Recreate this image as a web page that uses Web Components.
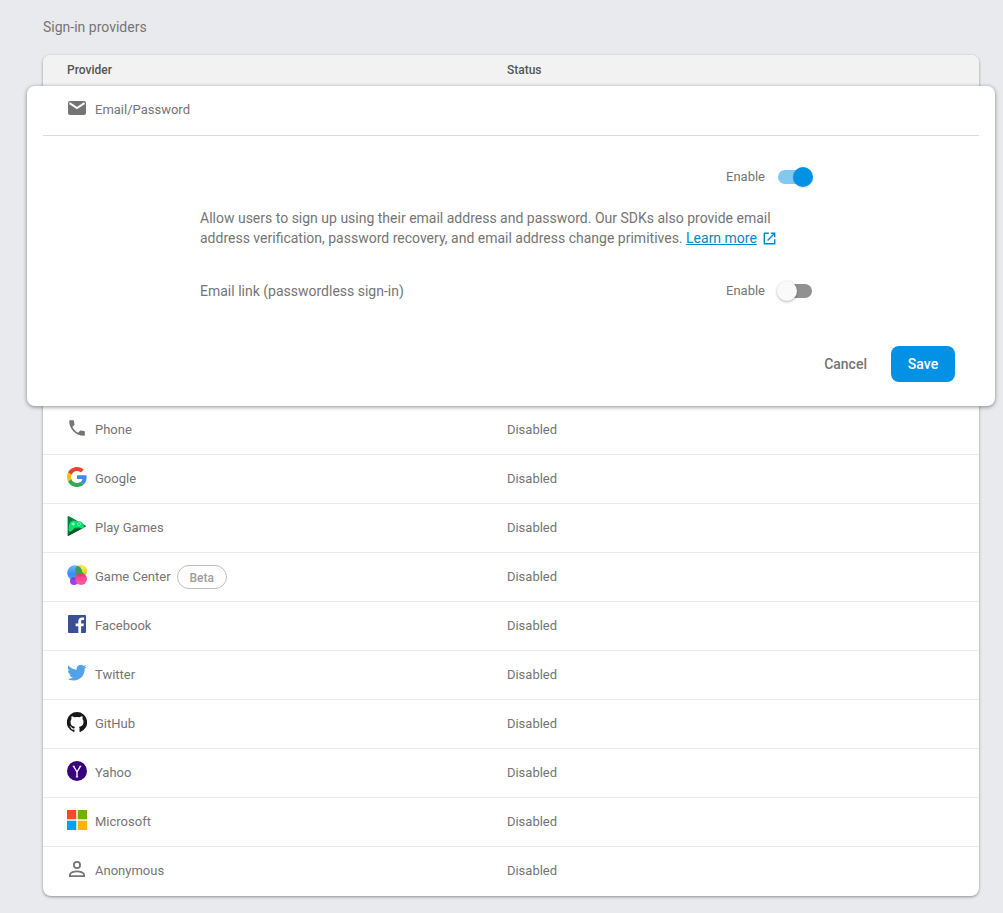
<!DOCTYPE html>
<html lang="en">
<head>
<meta charset="utf-8">
<meta name="viewport" content="width=device-width, initial-scale=1">
<title>Sign-in providers</title>
<style>
    body {
        margin: 0;
        background: #e8eaed;
        color: #757575;
        font-family: Roboto, "Liberation Sans", sans-serif;
        font-size: 13px;
        line-height: 20px;
    }
</style>
</head>
<body>
<sign-in-providers></sign-in-providers>

<script>
const ICONS = {
    email: `<path fill="#757575" d="M3 3h14a2 2 0 0 1 2 2v10a2 2 0 0 1-2 2H3a2 2 0 0 1-2-2V5a2 2 0 0 1 2-2z"/><path fill="none" stroke="#fff" stroke-width="2" d="M2.500 5.200 10 10l7.500-4.800"/>`,
    phone: `<path fill="#757575" transform="translate(-.4 -.4) scale(.87)" d="M6.620 10.790c1.440 2.830 3.760 5.140 6.590 6.590l2.200-2.200c.27-.27.67-.36 1.020-.24 1.120.37 2.330.57 3.570.57.55 0 1 .45 1 1V20c0 .55-.45 1-1 1-9.390 0-17-7.610-17-17 0-.55.45-1 1-1h3.500c.55 0 1 .45 1 1 0 1.250.2 2.450.57 3.570.11.35.03.74-.25 1.020l-2.200 2.200z"/>`,
    google: `<g transform="scale(.4167)"><path fill="#ea4335" d="M24 9.500c3.540 0 6.710 1.220 9.210 3.600l6.850-6.850C35.900 2.380 30.470 0 24 0 14.620 0 6.510 5.380 2.560 13.220l7.980 6.190C12.430 13.720 17.740 9.500 24 9.500z"/><path fill="#4285f4" d="M46.980 24.550c0-1.570-.15-3.090-.38-4.550H24v9.020h12.940c-.58 2.960-2.260 5.480-4.780 7.180l7.730 6c4.510-4.180 7.090-10.360 7.090-17.650z"/><path fill="#fbbc05" d="M10.530 28.590c-.48-1.450-.76-2.990-.76-4.590s.27-3.140.76-4.590l-7.980-6.190C.92 16.460 0 20.120 0 24s.92 7.540 2.560 10.780l7.970-6.190z"/><path fill="#34a853" d="M24 48c6.480 0 11.930-2.130 15.890-5.810l-7.730-6c-2.150 1.450-4.920 2.300-8.160 2.300-6.260 0-11.570-4.220-13.470-9.910l-7.980 6.190C6.510 42.620 14.620 48 24 48z"/></g>`,
    play: `<path fill="#087a3b" d="M1.200.2c-.4.100-.6.400-.6.900v18c0 .500.400.800.900.600l17-9c.7-.4.7-.9 0-1.300L2 .2a1 1 0 0 0-.8 0z"/><path fill="#07552f" d="M.6 19 5 13.600l10.500-1.300L1.500 19.700c-.5.200-.9-.1-.9-.7z"/><path fill="#05e070" d="M4.200 5.200c2-.9 3.600-.9 5 .1h3.600c1.900.2 3.100 1.700 3.900 4.500.4 1.700-.3 2.700-1.500 2.600-1.200 0-2-1-3.200-1H8.400c-1.400 0-2.200 2.500-4 3.800-1.400 1-2.500.4-2.700-1.200C1.500 10.500 2.200 6.400 4.200 5.200z"/><path fill="none" stroke="#b8ffd0" stroke-width="1" d="M4.600 8h3.200M6.200 6.400v3.200"/><g fill="#b8ffd0"><circle cx="12" cy="6.500" r=".6"/><circle cx="12" cy="9.300" r=".6"/><circle cx="10.600" cy="7.900" r=".6"/><circle cx="13.400" cy="7.900" r=".6"/></g>`,
    game: `<defs><radialGradient id="y" cx=".65" cy=".2"><stop stop-color="#fff04a"/><stop offset="1" stop-color="#e9c51d"/></radialGradient><linearGradient id="b" x2="0" y2="1"><stop stop-color="#6fb4fb"/><stop offset=".6" stop-color="#3b8bee"/><stop offset="1" stop-color="#58aef5"/></linearGradient><linearGradient id="p" x2="0" y2="1"><stop stop-color="#f2307f"/><stop offset="1" stop-color="#ff5fa8"/></linearGradient></defs><circle cx="14" cy="6" r="6" fill="url(#y)"/><circle cx="7" cy="16" r="4" fill="#a23cf3"/><circle cx="7.800" cy="7.800" r="7.600" fill="url(#b)"/><path fill="#3f9c55" d="M10.500.8A7.600 7.600 0 0 1 14.600 11.400 6 6 0 0 1 10.500.8z"/><circle cx="14" cy="14" r="6" fill="url(#p)"/><path fill="#7e43d1" d="M3.400 14.200A4 4 0 0 1 8.200 12.200L8.800 15.300A7.600 7.600 0 0 1 3.400 14.200z"/><path fill="#ea3e58" d="M9.300 10.300a6 6 0 0 1 8-1.200c-1.500 2.200-5.300 3.200-8 1.200z"/>`,
    facebook: `<path fill="#3b5091" d="M2 1h16a1 1 0 0 1 1 1v16a1 1 0 0 1-1 1H2a1 1 0 0 1-1-1V2a1 1 0 0 1 1-1z"/><path fill="#fff" d="M11.300 19v-6.700H8.600V9.400h2.700V7.200c0-2.500 1.500-3.800 3.700-3.800.9 0 1.800.1 2.100.1v2.600h-1.500c-1.200 0-1.500.6-1.500 1.500v1.800h2.800l-.4 2.900h-2.400V19z"/>`,
    twitter: `<path fill="#50a2e9" transform="translate(.2 0) scale(.81)" d="M23.950 4.570a10 10 0 0 1-2.820.77 4.960 4.960 0 0 0 2.160-2.720c-.95.55-2 .95-3.130 1.180a4.920 4.920 0 0 0-8.380 4.480C7.690 8.100 4.070 6.130 1.640 3.160a4.920 4.920 0 0 0 1.520 6.570 4.900 4.900 0 0 1-2.230-.61v.06a4.920 4.920 0 0 0 3.950 4.830 5 5 0 0 1-2.210.08 4.940 4.940 0 0 0 4.600 3.420A9.870 9.870 0 0 1 0 19.540a14 14 0 0 0 7.550 2.210c9.050 0 14-7.500 14-13.980 0-.21 0-.42-.02-.63a9.900 9.900 0 0 0 2.420-2.570z"/>`,
    github: `<path fill="#191717" transform="translate(-.2 -.2) scale(.85)" d="M12 .3a12 12 0 0 0-3.790 23.390c.6.110.82-.26.82-.58v-2.230c-3.340.73-4.040-1.420-4.040-1.420-.55-1.390-1.330-1.760-1.330-1.760-1.090-.74.08-.73.08-.73 1.200.09 1.840 1.240 1.840 1.240 1.070 1.840 2.810 1.310 3.500 1 .1-.78.41-1.310.76-1.610-2.670-.3-5.470-1.330-5.470-5.930 0-1.310.46-2.380 1.240-3.220-.14-.3-.54-1.520.1-3.180 0 0 1.010-.32 3.300 1.230a11.500 11.500 0 0 1 6 0c2.280-1.550 3.290-1.230 3.290-1.230.64 1.660.24 2.880.12 3.180a4.650 4.650 0 0 1 1.230 3.220c0 4.610-2.810 5.630-5.480 5.920.42.36.81 1.100.81 2.220v3.290c0 .32.21.69.82.57A12 12 0 0 0 12 .3"/>`,
    yahoo: `<circle cx="10" cy="10" r="10" fill="#39007d"/><path fill="none" stroke="#fff" stroke-width="1.400" d="M6.400 5 10 11l3.600-6M10 10.700v5.600"/><path fill="none" stroke="#fff" stroke-width=".7" d="M5.600 5.200h2.200M12.400 5.200h2M8.700 16h2.600"/>`,
    microsoft: `<path fill="#f1501e" d="M0 0h9.300v9.300H0z"/><path fill="#75b000" d="M10.700 0H20v9.300h-9.300z"/><path fill="#00a1f1" d="M0 10.700h9.300V20H0z"/><path fill="#ffb500" d="M10.700 10.700H20V20h-9.300z"/>`,
    anonymous: `<g fill="none" stroke="#757575" stroke-width="1.800"><circle cx="10" cy="6" r="3.100"/><path d="M2.900 17.100v-1.300c0-2.300 4.700-3.500 7.100-3.500s7.100 1.200 7.100 3.500v1.300z"/></g>`,
    open: `<path fill="none" stroke="#0288d1" stroke-width="2.200" d="M9 2H2v16h16v-7M12 2h6v6M18 2 7 13"/>`
};

const PROVIDERS = [
    ['phone', 'Phone'],
    ['google', 'Google'],
    ['play', 'Play Games'],
    ['game', 'Game Center', 'Beta'],
    ['facebook', 'Facebook'],
    ['twitter', 'Twitter'],
    ['github', 'GitHub'],
    ['yahoo', 'Yahoo'],
    ['microsoft', 'Microsoft'],
    ['anonymous', 'Anonymous']
];

class SvgIcon extends HTMLElement {
    constructor() {
        super();
        this.attachShadow({mode: 'open'});
    }

    connectedCallback() {
        this.shadowRoot.innerHTML = `
        <style>
            :host { display: inline-block; flex: none; width: 20px; height: 20px; }
            svg { display: block; width: 100%; height: 100%; }
        </style>
        <svg viewBox="0 0 20 20" aria-hidden="true">${ICONS[this.getAttribute('name')]}</svg>
        `;
    }
}

// icon + name, with an optional badge in the "badge" slot
class ProviderName extends HTMLElement {
    constructor() {
        super();
        this.attachShadow({mode: 'open'});
    }

    connectedCallback() {
        this.shadowRoot.innerHTML = `
        <style>
            :host { display: flex; align-items: center; height: 48px; }
            svg-icon { margin: 0 8px 4px 0; }
            ::slotted([slot=badge]) { margin-left: 6px; }
        </style>
        <svg-icon name="${this.getAttribute('icon')}"></svg-icon>
        <slot></slot>
        <slot name="badge"></slot>
        `;
    }
}

class BetaChip extends HTMLElement {
    constructor() {
        super();
        this.attachShadow({mode: 'open'});
    }

    connectedCallback() {
        this.shadowRoot.innerHTML = `
        <style>
            :host {
                padding: 2px 12px 0;
                border: 1px solid #bdbdbd;
                border-radius: 12px;
                color: #9e9e9e;
                font-size: 12px;
                font-weight: 500;
            }
        </style>
        <slot></slot>
        `;
    }
}

class ToggleSwitch extends HTMLElement {
    constructor() {
        super();
        this.attachShadow({mode: 'open'});
    }

    connectedCallback() {
        this.shadowRoot.innerHTML = `
        <style>${this.getStyle()}</style>
        <label for="toggle"><slot></slot></label>
        <input id="toggle" type="checkbox" role="switch" ${this.hasAttribute('checked') ? 'checked' : ''}>
        `;
    }

    getStyle() {
        return `
        :host { display: flex; align-items: center; gap: 12px; }

        input {
            appearance: none;
            position: relative;
            width: 36px;
            height: 20px;
            margin: 0;
            cursor: pointer;
        }

        input::before {
            content: "";
            position: absolute;
            inset: 3px 1px;
            border-radius: 7px;
            background: #919191;
        }

        input::after {
            content: "";
            position: absolute;
            top: 0;
            left: 0;
            width: 20px;
            height: 20px;
            border-radius: 50%;
            background: #fafafa;
            box-shadow: 0 1px 3px rgba(0,0,0,0.3);
        }

        input:checked::before { background: #81c9f2; }
        input:checked::after {
            left: auto;
            right: 0;
            background: #0391e5;
            box-shadow: 0 1px 2px rgba(0,0,0,0.15);
        }
        `;
    }
}

class MdButton extends HTMLElement {
    constructor() {
        super();
        this.attachShadow({mode: 'open'});
    }

    connectedCallback() {
        this.shadowRoot.innerHTML = `
        <style>
            :host { display: block; }
            button {
                min-width: 64px;
                height: 36px;
                padding: 0 16px;
                border: 0;
                border-radius: 8px;
                background: none;
                color: inherit;
                font: 500 14px/36px Roboto, "Liberation Sans", sans-serif;
                cursor: pointer;
            }
            :host([primary]) button { background: #0391e5; color: #fff; }
        </style>
        <button type="button"><slot></slot></button>
        `;
    }
}

class ProviderPanel extends HTMLElement {
    constructor() {
        super();
        this.attachShadow({mode: 'open'});
    }

    connectedCallback() {
        this.shadowRoot.innerHTML = `
        <style>${this.getStyle()}</style>
        <header><slot name="heading"></slot></header>
        <div class="settings">
            <div class="row end"><toggle-switch checked>Enable</toggle-switch></div>
            <p>Allow users to sign up using their email address and password. Our SDKs also provide email address verification, password recovery, and email address change primitives. <a href="#">Learn more<svg-icon name="open"></svg-icon></a></p>
            <div class="row"><span>Email link (passwordless sign-in)</span><toggle-switch>Enable</toggle-switch></div>
        </div>
        <footer>
            <md-button>Cancel</md-button>
            <md-button primary>Save</md-button>
        </footer>
        `;
    }

    getStyle() {
        return `
        :host {
            display: block;
            position: relative;
            z-index: 1;
            margin: 0 -16px;
            border-radius: 8px;
            background: #fff;
            box-shadow: 0 1px 4px rgba(0,0,0,0.45);
        }

        header {
            margin: 0 16px;
            padding: 0 24px 1px;
            border-bottom: 1px solid #dcdcdc;
        }

        .settings {
            box-sizing: border-box;
            max-width: 622px;
            margin: 0 auto;
            padding-top: 22px;
            font-size: 14px;
        }

        .row {
            display: flex;
            align-items: center;
            justify-content: space-between;
            height: 38px;
            padding-right: 9px;
        }

        .end { justify-content: flex-end; }

        toggle-switch { font-size: 13px; }

        p {
            max-width: 584px;
            margin: 12px 0 24px;
        }

        a { color: #0288d1; white-space: nowrap; }
        a svg-icon { width: 13px; height: 13px; margin-left: 6px; vertical-align: -2px; }

        footer {
            display: flex;
            justify-content: flex-end;
            gap: 8px;
            padding: 36px 40px 24px;
        }
        `;
    }
}

class SignInProviders extends HTMLElement {
    constructor() {
        super();
        this.attachShadow({mode: 'open'});
    }

    connectedCallback() {
        this.shadowRoot.innerHTML = `
        <style>${this.getStyle()}</style>
        <h1>Sign-in providers</h1>
        <table>
            <thead>
                <tr><th class="name" scope="col">Provider</th><th scope="col">Status</th></tr>
            </thead>
            <tbody>
                <tr>
                    <td class="open" colspan="2">
                        <provider-panel>
                            <provider-name slot="heading" icon="email">Email/Password</provider-name>
                        </provider-panel>
                    </td>
                </tr>
                ${PROVIDERS.map(p => this.getRow(...p)).join('')}
            </tbody>
        </table>
        `;
    }

    getRow(icon, name, badge) {
        const chip = badge ? `<beta-chip slot="badge">${badge}</beta-chip>` : '';
        return `<tr><td><provider-name icon="${icon}">${name}${chip}</provider-name></td><td>Disabled</td></tr>`;
    }

    getStyle() {
        return `
        :host {
            display: block;
            padding: 17px 24px 17px 43px;
        }

        h1 {
            margin: 0 0 18px;
            font-size: 14px;
            font-weight: 400;
        }

        table {
            width: 100%;
            table-layout: fixed;
            border-spacing: 0;
            border-radius: 8px;
            background: #fff;
            box-shadow: 0 1px 3px rgba(0,0,0,0.4);
        }

        th {
            box-sizing: border-box;
            height: 31px;
            padding: 0 24px 2px;
            background: #f2f2f2;
            color: #555;
            font-size: 12px;
            font-weight: 500;
            text-align: left;
        }

        th:first-child { border-top-left-radius: 8px; }
        th:last-child { border-top-right-radius: 8px; }
        .name { width: 47%; }

        td {
            padding: 0 24px;
            border-bottom: 1px solid #ebebeb;
        }

        td.open { padding: 0; border: 0; }
        tr:last-child td { border-color: transparent; }
        `;
    }
}

customElements.define('svg-icon', SvgIcon);
customElements.define('provider-name', ProviderName);
customElements.define('beta-chip', BetaChip);
customElements.define('toggle-switch', ToggleSwitch);
customElements.define('md-button', MdButton);
customElements.define('provider-panel', ProviderPanel);
customElements.define('sign-in-providers', SignInProviders);
</script>
</body>
</html>
